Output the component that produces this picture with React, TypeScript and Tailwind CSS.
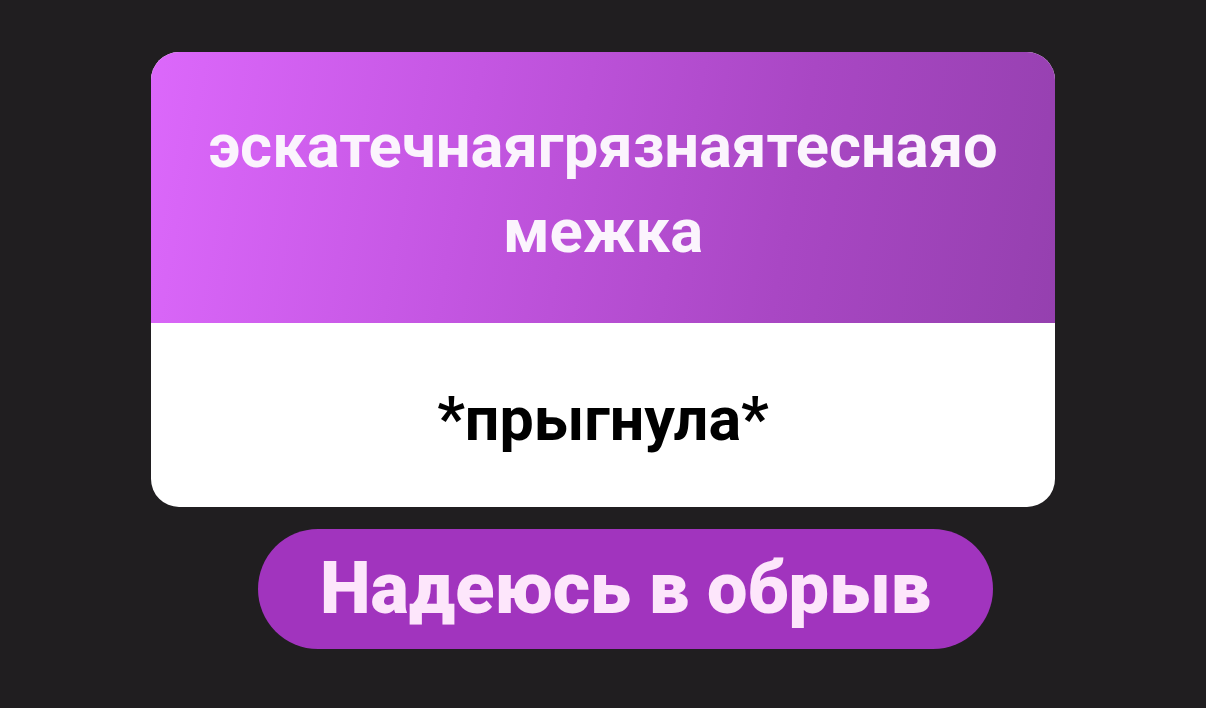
export default function App() {
  return (
    <div
      className="flex min-h-[708px] w-full flex-col items-center bg-[#201e20] pt-[52px]"
      style={{ fontFamily: 'Roboto, "Noto Sans", sans-serif' }}
    >
      <div className="w-[904px] overflow-hidden rounded-[28px] bg-white">
        <div className="flex h-[271px] items-center justify-center bg-[linear-gradient(100deg,#dc68fb_0%,#c456e2_35%,#a947c4_70%,#9540af_100%)] px-[50px] pt-[2px]">
          <h1 className="text-center text-[61.5px] font-bold leading-[85px] text-[#fbf4fd] [overflow-wrap:anywhere]">
            эскатечнаягрязнаятеснаяомежка
          </h1>
        </div>
        <div className="flex h-[184px] items-center justify-center pt-[8px]">
          <p className="text-[61px] font-bold leading-none text-black">*прыгнула*</p>
        </div>
      </div>
      <div className="ml-[45px] mt-[22px] flex h-[120px] w-[735px] items-center justify-center rounded-full bg-[#a134be]">
        <span className="text-[72px] font-black leading-none text-[#fde6fb]">Надеюсь в обрыв</span>
      </div>
    </div>
  );
}
